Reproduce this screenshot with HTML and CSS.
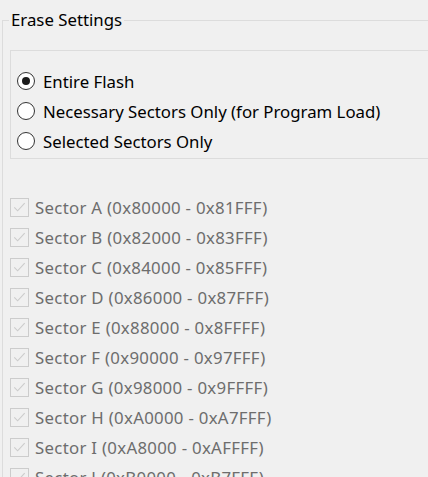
FILE: index.html
```html
<!DOCTYPE html>
<html>
<head>
<meta charset="utf-8">
<link rel="stylesheet" href="styles.css">
</head>
<body>
<div class="page">
  <fieldset class="group">
    <legend class="legend">Erase Settings</legend>
    <div class="modes">
      <label class="radio-row"><span class="radio checked"></span><span>Entire Flash</span></label>
      <label class="radio-row"><span class="radio"></span><span>Necessary Sectors Only (for Program Load)</span></label>
      <label class="radio-row"><span class="radio"></span><span>Selected Sectors Only</span></label>
    </div>
    <div class="sectors">
      <div class="check-row"><span class="check"><svg viewBox="0 0 18 18" width="18" height="18"><polyline points="3.5,9.5 7,13 14.5,5" /></svg></span><span>Sector A (0x80000 - 0x81FFF)</span></div>
      <div class="check-row"><span class="check"><svg viewBox="0 0 18 18" width="18" height="18"><polyline points="3.5,9.5 7,13 14.5,5" /></svg></span><span>Sector B (0x82000 - 0x83FFF)</span></div>
      <div class="check-row"><span class="check"><svg viewBox="0 0 18 18" width="18" height="18"><polyline points="3.5,9.5 7,13 14.5,5" /></svg></span><span>Sector C (0x84000 - 0x85FFF)</span></div>
      <div class="check-row"><span class="check"><svg viewBox="0 0 18 18" width="18" height="18"><polyline points="3.5,9.5 7,13 14.5,5" /></svg></span><span>Sector D (0x86000 - 0x87FFF)</span></div>
      <div class="check-row"><span class="check"><svg viewBox="0 0 18 18" width="18" height="18"><polyline points="3.5,9.5 7,13 14.5,5" /></svg></span><span>Sector E (0x88000 - 0x8FFFF)</span></div>
      <div class="check-row"><span class="check"><svg viewBox="0 0 18 18" width="18" height="18"><polyline points="3.5,9.5 7,13 14.5,5" /></svg></span><span>Sector F (0x90000 - 0x97FFF)</span></div>
      <div class="check-row"><span class="check"><svg viewBox="0 0 18 18" width="18" height="18"><polyline points="3.5,9.5 7,13 14.5,5" /></svg></span><span>Sector G (0x98000 - 0x9FFFF)</span></div>
      <div class="check-row"><span class="check"><svg viewBox="0 0 18 18" width="18" height="18"><polyline points="3.5,9.5 7,13 14.5,5" /></svg></span><span>Sector H (0xA0000 - 0xA7FFF)</span></div>
      <div class="check-row"><span class="check"><svg viewBox="0 0 18 18" width="18" height="18"><polyline points="3.5,9.5 7,13 14.5,5" /></svg></span><span>Sector I (0xA8000 - 0xAFFFF)</span></div>
      <div class="check-row"><span class="check"><svg viewBox="0 0 18 18" width="18" height="18"><polyline points="3.5,9.5 7,13 14.5,5" /></svg></span><span>Sector J (0xB0000 - 0xB7FFF)</span></div>
    </div>
  </fieldset>
</div>
</body>
</html>
```

FILE: styles.css
```css
html, body {
  margin: 0;
  padding: 0;
  background: #f0f0f0;
  overflow: hidden;
  height: 477px;
}
body {
  font-family: "Noto Sans", "Open Sans", sans-serif;
  font-size: 16.8px;
  color: #000;
}
.page {
  width: 460px;
  padding-top: 12px;
}
.group {
  margin: 0 0 0 2px;
  padding: 0 0 0 7px;
  border: 1px solid #dcdcdc;
  border-right: none;
  border-bottom: none;
  min-height: 600px;
}
.legend {
  margin-left: -1px;
  padding: 0 2px;
  line-height: 16px;
}
.modes {
  margin-top: 22px;
  border: 1px solid #dcdcdc;
  border-right: none;
  padding: 15px 0 2px 6px;
  display: flex;
  flex-direction: column;
}
.radio-row {
  height: 30px;
  display: flex;
  align-items: center;
  gap: 8px;
}
.radio {
  width: 16px;
  height: 16px;
  border: 1px solid #333;
  border-radius: 50%;
  background: #fff;
  box-sizing: content-box;
  display: flex;
  align-items: center;
  justify-content: center;
  flex: none;
}
.radio.checked::after {
  content: "";
  width: 8px;
  height: 8px;
  border-radius: 50%;
  background: #1a1a1a;
}
.sectors {
  margin-top: 33px;
  display: flex;
  flex-direction: column;
  color: #6d6d6d;
  letter-spacing: 0.3px;
}
.check-row {
  height: 30px;
  display: flex;
  align-items: center;
  gap: 6px;
}
.check {
  width: 17px;
  height: 17px;
  border: 1px solid #cccccc;
  display: flex;
  align-items: center;
  justify-content: center;
  flex: none;
}
.check svg {
  fill: none;
  stroke: #cccccc;
  stroke-width: 1.2;
}
```
